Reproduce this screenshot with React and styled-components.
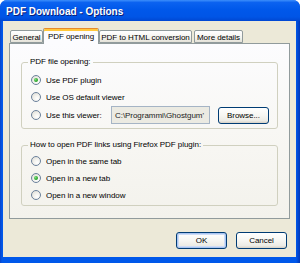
import React from "react";
import styled, { createGlobalStyle } from "styled-components";

const Global = createGlobalStyle`
  html, body { margin: 0; padding: 0; background: #ffffff; }
  body { width: 300px; height: 263px; overflow: hidden; font-family: "Liberation Sans", Arial, sans-serif; }
  * { box-sizing: border-box; }
`;

const Window = styled.div`
  width: 300px;
  height: 263px;
  display: flex;
  flex-direction: column;
  background: linear-gradient(90deg, #0842C8 0px, #0058EA 2px, #0058EA 296px, #0037B8 300px);
  border-radius: 7px 7px 0 0;
  overflow: hidden;
  font-size: 8px;
  letter-spacing: -0.05px;
  color: #000;
`;

const TitleBar = styled.div`
  height: 21px;
  flex: none;
  display: flex;
  align-items: center;
  padding: 2px 0 0 6px;
  background: linear-gradient(180deg, #3C8EFB 0%, #0B62F0 12%, #0058EA 45%, #0055E6 80%, #0047D2 100%);
  color: #fff;
  font-weight: bold;
  font-size: 10px;
  letter-spacing: 0;
  text-shadow: 1px 1px 0 #0A1E78;
`;

const Frame = styled.div`
  flex: 1;
  display: flex;
  padding: 0 7px 6px 3px;
`;

const Body = styled.div`
  flex: 1;
  display: flex;
  flex-direction: column;
  background: #ECE9D8;
  padding: 7px 6px 0 6px;
`;

const TabRow = styled.div`
  display: flex;
  align-items: flex-end;
  height: 16px;
  margin-bottom: -1px;
  position: relative;
  z-index: 1;
`;

const Tab = styled.div`
  width: ${p => p.$w}px;
  margin-left: ${p => p.$ml || 0}px;
  height: ${p => (p.$active ? 16 : 13)}px;
  margin-bottom: ${p => (p.$active ? 0 : 1)}px;
  display: flex;
  align-items: center;
  justify-content: center;
  border: 1px solid #919B9C;
  border-bottom: ${p => (p.$active ? "none" : "1px solid #919B9C")};
  border-radius: 2px 2px 0 0;
  background: ${p => (p.$active ? "#FCFCFE" : "linear-gradient(180deg, #FFFFFF 0%, #F4F3EE 60%, #E4E2D8 100%)")};
  box-shadow: ${p => (p.$active ? "inset 0 2px 0 #FFC83C" : "none")};
  border-top-color: ${p => (p.$active ? "#E68B2C" : "#919B9C")};
  white-space: nowrap;
  padding-top: ${p => (p.$active ? 0 : 1)}px;
`;

const Panel = styled.div`
  border: 1px solid #919B9C;
  background: linear-gradient(180deg, #FCFCFE 0%, #F7F6F2 60%, #F3F2EC 100%);
  padding: 13px 11px 12px 11px;
  display: flex;
  flex-direction: column;
  gap: 11px;
`;

const Group = styled.fieldset`
  margin: 0;
  border: 1px solid #D0D0BF;
  border-radius: 3px;
  padding: ${p => p.$pt}px 8px ${p => p.$pb}px 8px;
  display: flex;
  flex-direction: column;
  gap: 1px;
  min-width: 0;
`;

const Legend = styled.legend`
  padding: 0 2px;
  margin-left: -2px;
  line-height: 10px;
  height: 10px;
  color: #000;
`;

const Row = styled.label`
  display: flex;
  align-items: center;
  height: ${p => p.$h || 16}px;
  gap: 5px;
  white-space: nowrap;
`;

const Radio = styled.span`
  width: 10px;
  height: 10px;
  flex: none;
  border-radius: 50%;
  border: 1px solid #6B819B;
  background: radial-gradient(circle at 65% 70%, #FFFFFF 0%, #F2F1EC 45%, #D9D8D0 100%);
  display: flex;
  align-items: center;
  justify-content: center;
  margin-left: 1px;
  &::after {
    content: "";
    width: 4px;
    height: 4px;
    border-radius: 50%;
    background: radial-gradient(circle at 35% 35%, #7CE07C 0%, #2EA52E 60%, #1A8A1A 100%);
    display: ${p => (p.$checked ? "block" : "none")};
  }
`;

const Label = styled.span`
  flex: none;
  width: 60px;
`;

const Input = styled.div`
  width: 99px;
  height: 18px;
  border: 1px solid #A5B4C5;
  background: #EBEAE2;
  display: flex;
  align-items: center;
  padding: 0 3px;
  overflow: hidden;
  white-space: nowrap;
  color: #222;
`;

const Button = styled.div`
  width: 51px;
  height: ${p => p.$h || 17}px;
  margin-left: ${p => p.$ml || 0}px;
  border: 1px solid #003C74;
  border-radius: 3px;
  background: linear-gradient(180deg, #FFFFFF 0%, #F6F6F2 50%, #ECEBE5 85%, #D6D0C5 100%);
  box-shadow: ${p => (p.$default ? "inset 0 0 0 1px #A9C5F2, inset 0 0 0 2px #CEDCF5" : "none")};
  display: flex;
  align-items: center;
  justify-content: center;
  flex: none;
`;

const ButtonRow = styled.div`
  display: flex;
  justify-content: flex-end;
  gap: 9px;
  margin-top: 13px;
  padding-right: 3px;
`;

export default function App() {
  return (
    <>
      <Global />
      <Window>
        <TitleBar>PDF Download - Options</TitleBar>
        <Frame>
          <Body>
            <TabRow>
              <Tab $w={33} $ml={1}>General</Tab>
              <Tab $w={56} $active>PDF opening</Tab>
              <Tab $w={93}>PDF to HTML conversion</Tab>
              <Tab $w={49} $ml={2}>More details</Tab>
            </TabRow>
            <Panel>
              <Group $pt={5} $pb={4}>
                <Legend>PDF file opening:</Legend>
                <Row><Radio $checked />Use PDF plugin</Row>
                <Row><Radio />Use OS default viewer</Row>
                <Row $h={18}>
                  <Radio />
                  <Label>Use this viewer:</Label>
                  <Input>C:\Programmi\Ghostgum'</Input>
                  <Button $ml={3} $h={17}>Browse...</Button>
                </Row>
              </Group>
              <Group $pt={3} $pb={2}>
                <Legend>How to open PDF links using Firefox PDF plugin:</Legend>
                <Row><Radio />Open in the same tab</Row>
                <Row><Radio $checked />Open in a new tab</Row>
                <Row><Radio />Open in a new window</Row>
              </Group>
            </Panel>
            <ButtonRow>
              <Button $default>OK</Button>
              <Button>Cancel</Button>
            </ButtonRow>
          </Body>
        </Frame>
      </Window>
    </>
  );
}
